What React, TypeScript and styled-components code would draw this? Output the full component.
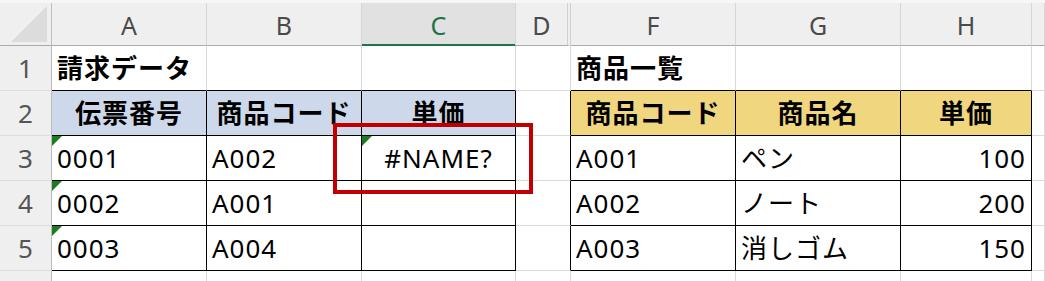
import React from "react";
import styled, { createGlobalStyle } from "styled-components";

const GlobalStyle = createGlobalStyle`
  html, body {
    margin: 0;
    padding: 0;
    background: #fff;
    overflow: hidden;
  }
  body {
    font-family: "Noto Sans", "Noto Sans CJK JP", sans-serif;
  }
`;

const BLUE = "#cdd9ea";
const GOLD = "#f1d680";
const GRID = "#dadada";
const INK = "#000";

const Sheet = styled.div`
  position: relative;
  width: 1045px;
  height: 281px;
  overflow: hidden;
  background: #fff;
`;

const TopStrip = styled.div`
  height: 3px;
  background: #f6f6f6;
`;

const Grid = styled.div`
  display: grid;
  grid-template-columns: 52px 155px 155px 154px 55px 165px 165px 131px 1fr;
  grid-template-rows: 43px repeat(6, 45px);
`;

const Corner = styled.div`
  position: relative;
  background: #efefef;
  border-right: 1px solid #bcbcbc;
  border-bottom: 1px solid #ababab;

  &::after {
    content: "";
    position: absolute;
    right: 4px;
    bottom: 3px;
    width: 36px;
    height: 36px;
    background: #dcdcdc;
    clip-path: polygon(100% 0, 100% 100%, 0 100%);
  }
`;

const ColHead = styled.div<{ $selected?: boolean; $hiddenAfter?: boolean }>`
  display: flex;
  align-items: center;
  justify-content: center;
  box-sizing: border-box;
  background: ${(p) => (p.$selected ? "#e1e1e1" : "#efefef")};
  border-right: ${(p) => (p.$hiddenAfter ? "4px double #d0d0d0" : "1px solid #d6d6d6")};
  border-bottom: 1px solid ${(p) => (p.$selected ? "#217346" : "#ababab")};
  box-shadow: ${(p) => (p.$selected ? "inset 0 -1px 0 #217346" : "none")};
  color: ${(p) => (p.$selected ? "#217346" : "#4a4a4a")};
  font-size: 25px;
  line-height: 1;
  padding-top: 2px;
`;

const RowHead = styled.div`
  display: flex;
  align-items: center;
  justify-content: center;
  background: #efefef;
  border-right: 1px solid #bcbcbc;
  border-bottom: 1px solid #dcdcdc;
  color: #555;
  font-size: 26px;
  line-height: 1;
`;

const Cell = styled.div<{
  $right: string;
  $bottom: string;
  $fill?: string;
  $align?: "left" | "center" | "right";
  $bold?: boolean;
  $flag?: boolean;
}>`
  position: relative;
  display: flex;
  align-items: center;
  justify-content: ${(p) =>
    p.$align === "center" ? "center" : p.$align === "right" ? "flex-end" : "flex-start"};
  box-sizing: border-box;
  padding: 0 5px 0 5px;
  background: ${(p) => p.$fill ?? "#fff"};
  border-right: 1px solid ${(p) => p.$right};
  border-bottom: 1px solid ${(p) => p.$bottom};
  color: #000;
  font-size: 26px;
  font-weight: ${(p) => (p.$bold ? 700 : 400)};
  letter-spacing: 1px;
  line-height: 1;
  white-space: nowrap;
  overflow: visible;

  &::before {
    content: "";
    display: ${(p) => (p.$flag ? "block" : "none")};
    position: absolute;
    top: 0;
    left: 0;
    width: 10px;
    height: 10px;
    background: #1e7b1e;
    clip-path: polygon(0 0, 100% 0, 0 100%);
  }
`;

const ErrorBox = styled.div`
  position: absolute;
  left: 333px;
  top: 123px;
  width: 200px;
  height: 71px;
  box-sizing: border-box;
  border: 4px solid #c00000;
  pointer-events: none;
`;

type CellDef = {
  text?: string;
  bold?: boolean;
  align?: "left" | "center" | "right";
  fill?: string;
  flag?: boolean;
};

const columns = ["A", "B", "C", "D", "F", "G", "H", ""];

const head = (text: string, fill: string): CellDef => ({ text, bold: true, align: "center", fill });
const num = (text: string): CellDef => ({ text, align: "right" });

const rows: CellDef[][] = [
  [{ text: "請求データ", bold: true }, {}, {}, {}, { text: "商品一覧", bold: true }, {}, {}, {}],
  [
    head("伝票番号", BLUE),
    head("商品コード", BLUE),
    head("単価", BLUE),
    {},
    head("商品コード", GOLD),
    head("商品名", GOLD),
    head("単価", GOLD),
    {},
  ],
  [
    { text: "0001", flag: true },
    { text: "A002" },
    { text: "#NAME?", align: "center", flag: true },
    {},
    { text: "A001" },
    { text: "ペン" },
    num("100"),
    {},
  ],
  [{ text: "0002", flag: true }, { text: "A001" }, {}, {}, { text: "A002" }, { text: "ノート" }, num("200"), {}],
  [{ text: "0003", flag: true }, { text: "A004" }, {}, {}, { text: "A003" }, { text: "消しゴム" }, num("150"), {}],
  [{}, {}, {}, {}, {}, {}, {}, {}],
];

// bordered ranges: rows 2-5, columns A-C and F-H
const inTable = (r: number, c: number) =>
  r >= 2 && r <= 5 && ((c >= 1 && c <= 3) || (c >= 5 && c <= 7));

const App: React.FC = () => (
  <Sheet>
    <GlobalStyle />
    <TopStrip />
    <Grid>
      <Corner />
      {columns.map((label, i) => (
        <ColHead key={i} $selected={label === "C"} $hiddenAfter={label === "D"}>
          {label}
        </ColHead>
      ))}
      {rows.map((row, ri) => {
        const r = ri + 1;
        return (
          <React.Fragment key={r}>
            <RowHead>{r <= 5 ? r : ""}</RowHead>
            {row.map((cell, ci) => {
              const c = ci + 1;
              const right = inTable(r, c) || inTable(r, c + 1) ? INK : GRID;
              const bottom = inTable(r, c) || inTable(r + 1, c) ? INK : GRID;
              return (
                <Cell
                  key={c}
                  $right={right}
                  $bottom={bottom}
                  $fill={cell.fill}
                  $align={cell.align}
                  $bold={cell.bold}
                  $flag={cell.flag}
                >
                  {cell.text}
                </Cell>
              );
            })}
          </React.Fragment>
        );
      })}
    </Grid>
    <ErrorBox />
  </Sheet>
);

export default App;
